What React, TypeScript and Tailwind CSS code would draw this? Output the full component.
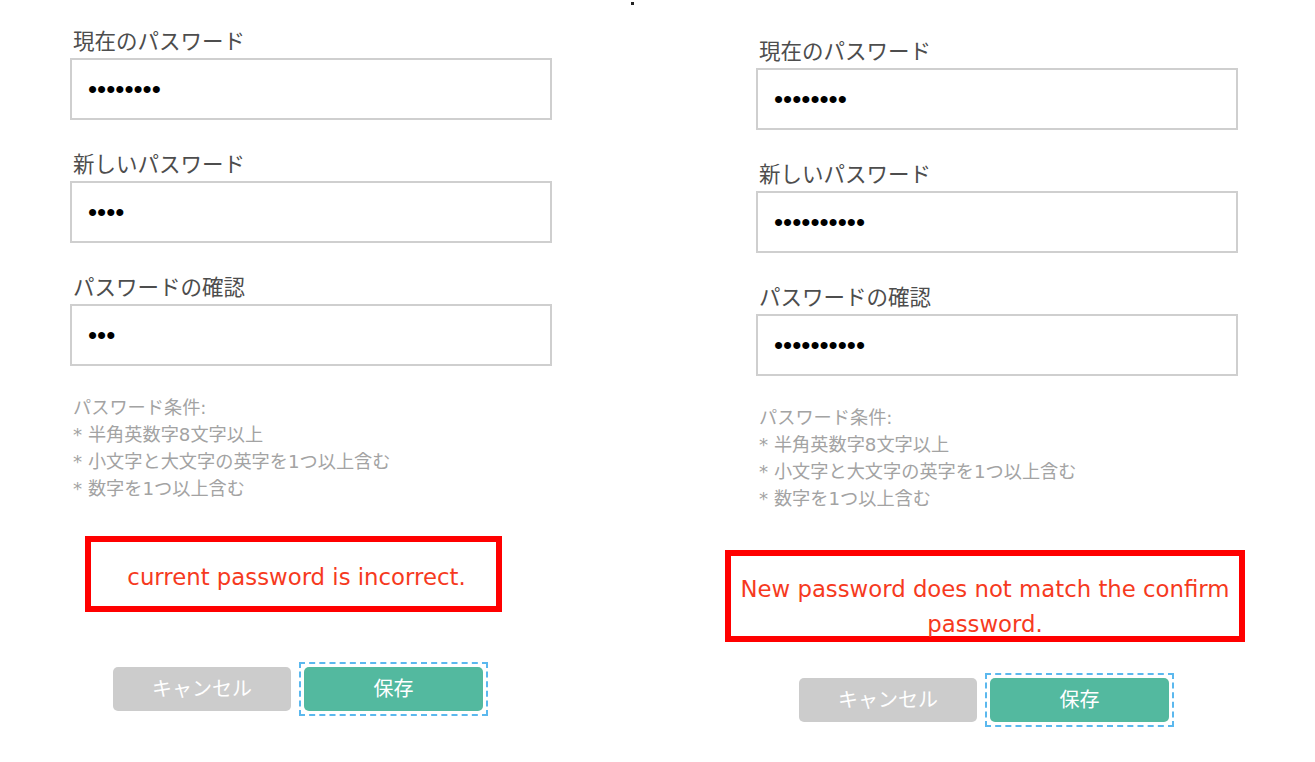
import React from 'react';

const font = { fontFamily: '"DejaVu Sans", "Noto Sans CJK JP", sans-serif' };
const dotFont = { fontFamily: '"Liberation Sans", Arial, sans-serif' };

type Field = { label: string; value: string };

const rules = ['パスワード条件:', '* 半角英数字8文字以上', '* 小文字と大文字の英字を1つ以上含む', '* 数字を1つ以上含む'];

const PasswordForm: React.FC<{
  fields: Field[];
  error: React.ReactNode;
  errorClass: string;
  rulesClass: string;
  buttonsClass: string;
}> = ({ fields, error, errorClass, rulesClass, buttonsClass }) => (
  <div className="w-[482px] flex flex-col">
    {fields.map((f, i) => (
      <div key={i} className={i === 0 ? '' : 'mt-[31px]'}>
        <label className="block pl-[3px] text-[21.5px] leading-[28px] text-[#4d4d4d]">{f.label}</label>
        <input
          type="password"
          value={f.value}
          readOnly
          className="mt-[2px] block w-full h-[62px] border-2 border-[#cfcfcf] bg-white pl-[16px] text-[26px] text-black outline-none"
          style={dotFont}
        />
      </div>
    ))}

    {/* password rules */}
    <div className={`${rulesClass} pl-[3px] text-[18.2px] leading-[27px] text-[#a3a3a3]`}>
      {rules.map((r) => (
        <div key={r}>{r}</div>
      ))}
    </div>

    {/* error message */}
    <div className={`${errorClass} border-[6px] border-[#ff0000] text-center text-[22.8px] leading-[35px] text-[#f63a1e]`}>
      {error}
    </div>

    {/* actions */}
    <div className={`${buttonsClass} flex items-center pl-[43px]`}>
      <button className="w-[178px] h-[44px] rounded-[5px] bg-[#cccccc] text-[20px] text-white">キャンセル</button>
      <div className="ml-[8px] border-2 border-dashed border-[#5bb8ee] p-[3px]">
        <button className="block w-[179px] h-[44px] rounded-[5px] bg-[#53b99f] text-[20px] text-white">保存</button>
      </div>
    </div>
  </div>
);

export default function App() {
  return (
    <div className="relative min-h-[762px] bg-white" style={font}>
      <span className="absolute left-[631px] top-[2px] h-[3px] w-[3px] bg-[#222]" />
      <div className="flex">
        <div className="ml-[70px] pt-[28px]">
          <PasswordForm
            fields={[
              { label: '現在のパスワード', value: 'abcdefgh' },
              { label: '新しいパスワード', value: 'abcd' },
              { label: 'パスワードの確認', value: 'abc' },
            ]}
            rulesClass="mt-[28px]"
            errorClass="mt-[34px] ml-[15px] w-[417px] h-[76px] pt-[18px] pl-[6px]"
            buttonsClass="mt-[50px]"
            error="current password is incorrect."
          />
        </div>
        <div className="ml-[204px] pt-[38px]">
          <PasswordForm
            fields={[
              { label: '現在のパスワード', value: 'abcdefgh' },
              { label: '新しいパスワード', value: 'abcdefghij' },
              { label: 'パスワードの確認', value: 'abcdefghij' },
            ]}
            rulesClass="mt-[28px]"
            errorClass="mt-[38px] ml-[-31px] w-[520px] h-[92px] px-[6px] pt-[16px]"
            buttonsClass="mt-[31px]"
            error="New password does not match the confirm password."
          />
        </div>
      </div>
    </div>
  );
}
